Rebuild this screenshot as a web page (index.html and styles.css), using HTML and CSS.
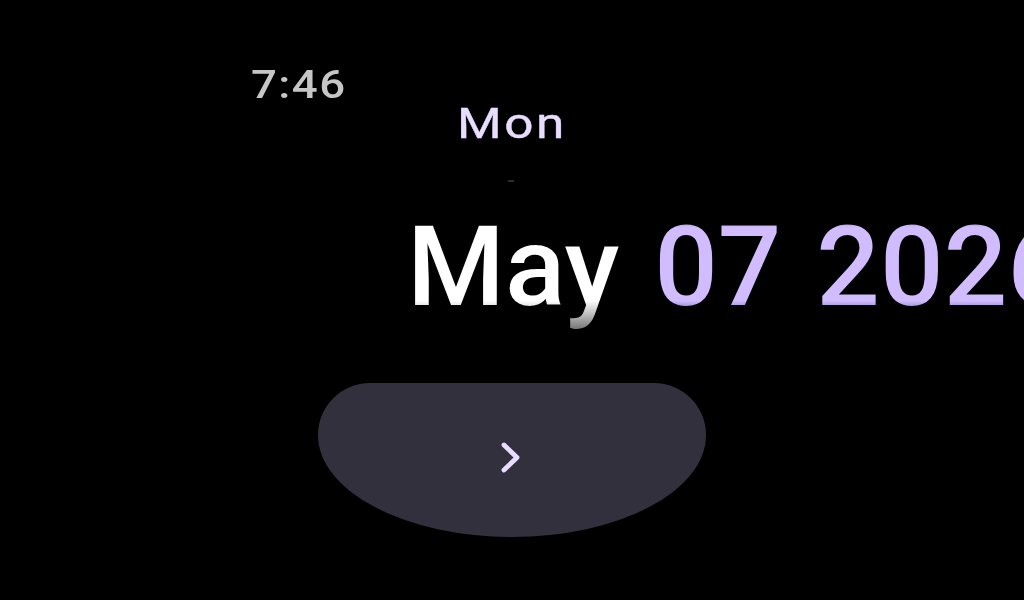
FILE: index.html
```html
<!DOCTYPE html>
<html>
<head>
<meta charset="utf-8">
<link rel="stylesheet" href="styles.css">
</head>
<body>
<div class="screen">
  <div class="time"><span class="time-text">7:46</span></div>
  <div class="day"><span class="day-text">Mon</span></div>
  <div class="dash"></div>
  <div class="date"><span class="month">May</span> <span class="num">07 2026</span></div>
  <div class="edge-button">
    <svg width="388" height="154" viewBox="0 0 388 154">
      <path class="edge-shape" d="M52,0 H336 A52,52 0 0 1 388,52 A194,102 0 0 1 0,52 A52,52 0 0 1 52,0 Z"/>
      <path class="chevron" d="M186,62 L199,74.5 L186,87"/>
    </svg>
  </div>
</div>
</body>
</html>
```
FILE: styles.css
```css
html, body {
  margin: 0;
  padding: 0;
  background: #000;
  overflow: hidden;
}
.screen {
  width: 1024px;
  height: 600px;
  overflow: hidden;
  display: flex;
  flex-direction: column;
  padding-top: 68px;
  box-sizing: border-box;
  font-family: Roboto, "Noto Sans", sans-serif;
}
.time {
  height: 34px;
  line-height: 34px;
  padding-left: 251px;
  font-size: 38px;
  font-weight: 500;
  color: #c6c6c6;
}
.time-text {
  display: inline-block;
  letter-spacing: 1.2px;
  transform: scaleX(1.2);
  transform-origin: left center;
}
.day {
  margin-top: 2px;
  height: 40px;
  line-height: 40px;
  font-size: 42px;
  color: #e9ddff;
  text-align: center;
}
.day-text {
  display: inline-block;
  letter-spacing: 2px;
  transform: scaleX(1.22);
  -webkit-text-stroke: 0.4px #e9ddff;
}
.dash {
  margin-top: 36px;
  margin-left: 508px;
  width: 6px;
  height: 2px;
  background: #2c2c2c;
}
.date {
  margin-top: 29px;
  height: 112px;
  line-height: 112px;
  padding-left: 407px;
  font-size: 112px;
  font-weight: 500;
  white-space: nowrap;
  word-spacing: 7px;
}
.month {
  background: linear-gradient(to bottom, #ffffff 0%, #ffffff 76%, #7a7a7a 97%);
  -webkit-background-clip: text;
  background-clip: text;
  color: transparent;
}
.num {
  background: linear-gradient(to bottom, #a892d8 16%, #d0bcff 20%, #d0bcff 76%, #ae9adf 80%);
  -webkit-background-clip: text;
  background-clip: text;
  color: transparent;
}
.edge-button {
  margin-top: 60px;
  display: flex;
  justify-content: center;
}
.edge-button svg {
  display: block;
}
.edge-shape {
  fill: #33303e;
}
.chevron {
  fill: none;
  stroke: #e8ddff;
  stroke-width: 4.8;
  stroke-linecap: round;
  stroke-linejoin: round;
}
```
